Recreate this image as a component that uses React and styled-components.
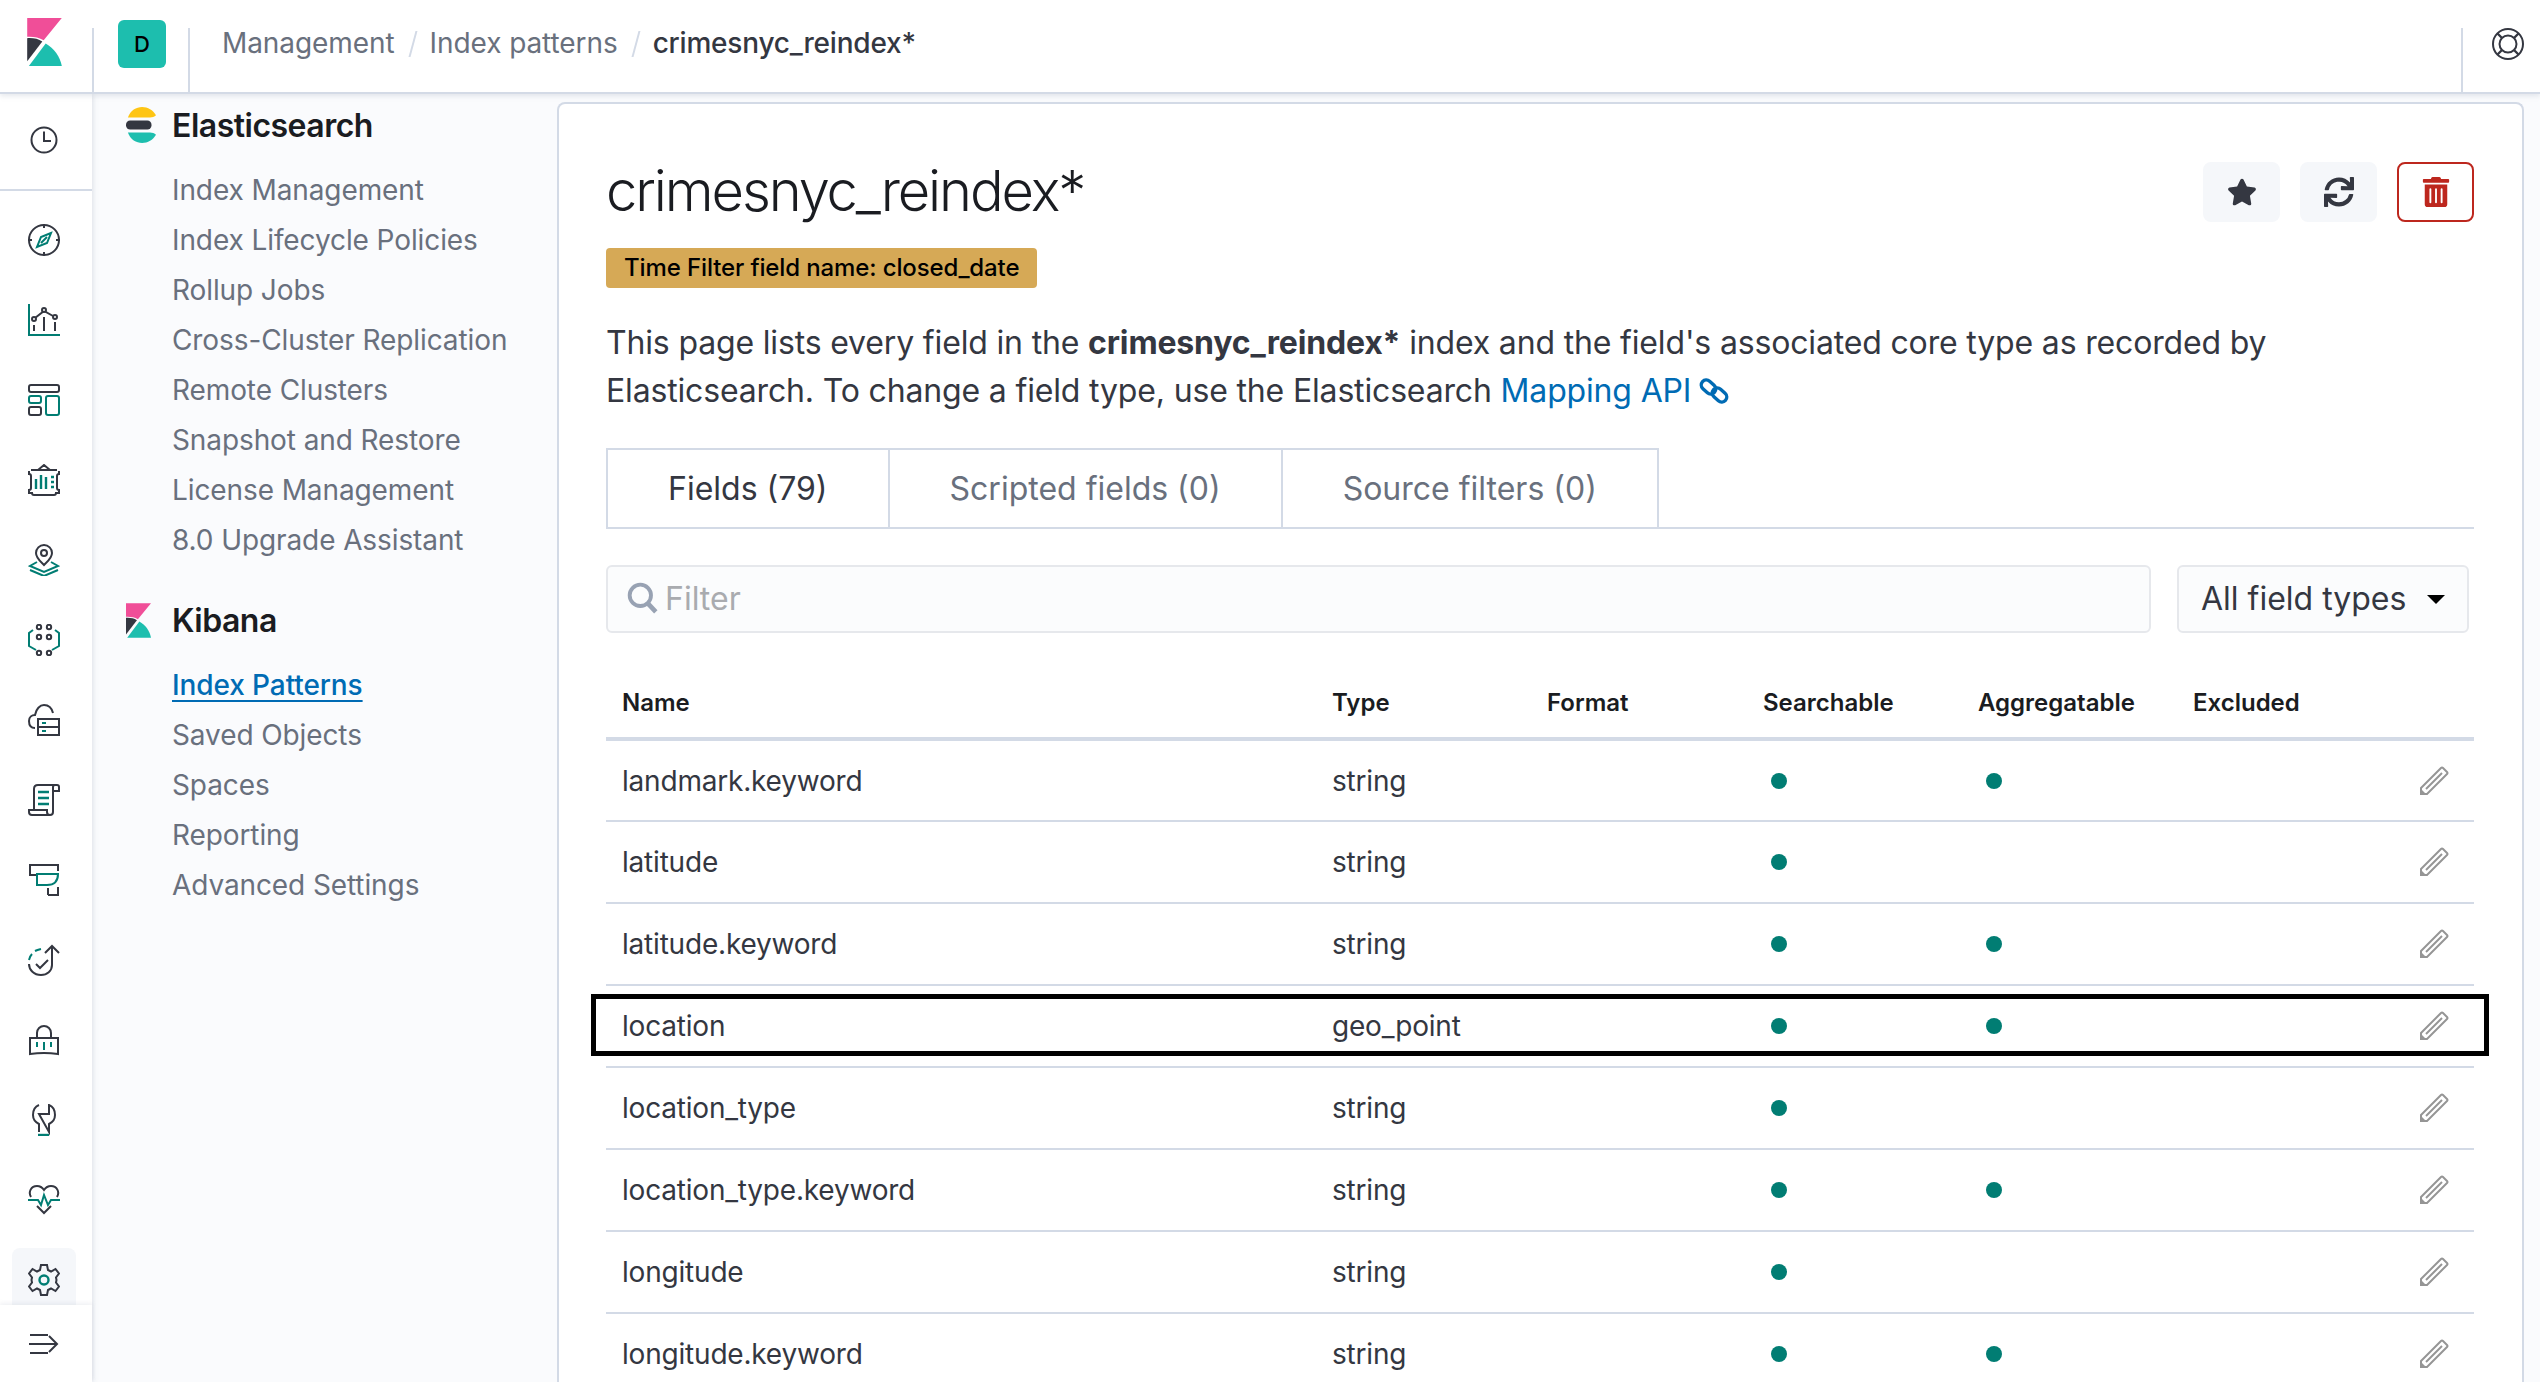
import React from "react";
import styled, { createGlobalStyle } from "styled-components";
import { FaStar, FaSync, FaTrashAlt } from "react-icons/fa";

const D = "#343741";
const G = "#017d73";

const Global = createGlobalStyle`
  html, body { margin: 0; padding: 0; height: 100%; overflow: hidden; background: #fafbfd; }
  * { box-sizing: border-box; }
  body { font-family: Inter, "Liberation Sans", sans-serif; color: ${D}; }
  #root { height: 100vh; }
`;

const Page = styled.div`
  display: flex;
  flex-direction: column;
  height: 100vh;
  overflow: hidden;
`;

const Header = styled.header`
  position: relative;
  z-index: 3;
  flex: none;
  display: flex;
  align-items: stretch;
  height: 94px;
  background: #fff;
  border-bottom: 2px solid #d3dae6;
  box-shadow: 0 2px 5px rgba(152, 162, 179, 0.25);
`;

const LogoCell = styled.div`
  flex: none;
  width: 92px;
  padding: 18px 0 0 26px;
`;

const HeaderDivider = styled.div`
  flex: none;
  align-self: flex-end;
  width: 2px;
  height: 64px;
  background: #d3dae6;
`;

const SpaceCell = styled.div`
  flex: none;
  width: 94px;
  padding: 20px 0 0 24px;
`;

const Avatar = styled.div`
  display: flex;
  align-items: center;
  justify-content: center;
  width: 48px;
  height: 48px;
  border-radius: 6px;
  background: #1dbeae;
  color: #000;
  font-size: 22px;
  font-weight: 500;
`;

const Crumbs = styled.nav`
  flex: 1;
  display: flex;
  align-items: flex-start;
  padding: 24px 0 0 32px;
  font-size: 28px;
  line-height: 38px;
  letter-spacing: -0.08px;
  color: #69707d;
`;

const CrumbSep = styled.span`
  display: inline-block;
  width: 2px;
  height: 26px;
  margin: 7px 16px 0 17px;
  background: #d3dae6;
  transform: skewX(-15deg);
`;

const CrumbCurrent = styled.span`
  color: ${D};
  font-weight: 500;
  letter-spacing: -0.2px;
`;

const HelpCell = styled.div`
  flex: none;
  width: 77px;
  padding: 28px 0 0 29px;
`;

const Body = styled.div`
  flex: 1;
  display: flex;
  min-height: 0;
`;

const Nav = styled.aside`
  position: relative;
  z-index: 2;
  flex: none;
  width: 92px;
  background: #fff;
  box-shadow: 1px 0 5px rgba(152, 162, 179, 0.3);
  display: flex;
  flex-direction: column;
`;

const RecentSection = styled.div`
  flex: none;
  height: 97px;
  display: flex;
  align-items: center;
  justify-content: center;
  padding: 0 4px 4px 0;
  border-bottom: 2px solid #d3dae6;
`;

const NavList = styled.div`
  flex: none;
  padding: 9px 4px 0 0;
`;

const NavItem = styled.div`
  height: 80px;
  display: flex;
  align-items: center;
  justify-content: center;
`;

const NavActive = styled.div`
  width: 64px;
  height: 64px;
  display: flex;
  align-items: center;
  justify-content: center;
  border-radius: 8px;
  background: #f5f7fa;
`;

const Collapse = styled.div`
  position: absolute;
  left: 0;
  right: 0;
  bottom: 0;
  height: 77px;
  display: flex;
  align-items: center;
  justify-content: center;
  padding-right: 4px;
  background: #fff;
  box-shadow: 0 -2px 4px rgba(152, 162, 179, 0.15);
`;

const Side = styled.div`
  flex: none;
  width: 465px;
  padding: 11px 0 0 34px;
  background: #fafbfd;
`;

const SideHead = styled.div`
  display: flex;
  align-items: center;
  height: 40px;
  margin: ${(p) => p.$top}px 0 20px;
  font-size: 32px;
  font-weight: 600;
  letter-spacing: -0.5px;
  color: #1a1c21;
`;

const SideIcon = styled.span`
  flex: none;
  width: 46px;
  display: flex;
  align-items: center;
`;

const SideList = styled.div`
  padding-left: 46px;
`;

const SideLink = styled.a`
  display: block;
  height: 50px;
  line-height: 50px;
  font-size: 28px;
  letter-spacing: -0.1px;
  color: ${(p) => (p.$active ? "#006bb4" : "#69707d")};
  font-weight: ${(p) => (p.$active ? 500 : 400)};
  text-decoration: ${(p) => (p.$active ? "underline" : "none")};
  text-underline-offset: 5px;
  text-decoration-thickness: 2px;
`;

const Panel = styled.main`
  flex: 1;
  min-width: 0;
  margin: 8px 16px 0 0;
  padding: 53px 48px 0 47px;
  background: #fff;
  border: 2px solid #d3dae6;
  border-bottom: 0;
  border-radius: 8px 8px 0 0;
  overflow: hidden;
`;

const TitleRow = styled.div`
  display: flex;
  justify-content: space-between;
  align-items: flex-start;
`;

const Title = styled.h1`
  margin: 0;
  font-size: 56px;
  line-height: 68px;
  font-weight: 300;
  letter-spacing: -2.1px;
  color: #1a1c21;
`;

const Actions = styled.div`
  display: flex;
  gap: 20px;
  padding-top: 5px;
`;

const IconButton = styled.button`
  width: 77px;
  height: 60px;
  display: flex;
  align-items: center;
  justify-content: center;
  padding: 0;
  border-radius: 8px;
  font-size: 30px;
  color: ${(p) => (p.$danger ? "#bd271e" : D)};
  background: ${(p) => (p.$danger ? "#fff" : "#f5f7fa")};
  border: 2px solid ${(p) => (p.$danger ? "#bd271e" : "#f5f7fa")};
`;

const Badge = styled.div`
  display: inline-block;
  height: 40px;
  margin-top: 23px;
  padding: 0 18px;
  border-radius: 4px;
  background: #d6a956;
  color: #000;
  font-size: 24px;
  line-height: 40px;
  font-weight: 500;
  letter-spacing: -0.12px;
`;

const Lead = styled.p`
  margin: 31px 0 0;
  width: 1720px;
  font-size: 32px;
  line-height: 48px;
  letter-spacing: -0.16px;
  color: ${D};
`;

const Strong = styled.strong`
  font-weight: 700;
`;

const DocLink = styled.a`
  color: #006bb4;
`;

const LinkGlyph = styled.svg`
  margin-left: 8px;
  vertical-align: -4px;
`;

const Tabs = styled.div`
  display: flex;
  margin-top: 33px;
  border-bottom: 2px solid #d3dae6;
`;

const Tab = styled.div`
  height: 81px;
  padding: 0 60px;
  margin-right: -2px;
  margin-bottom: -2px;
  line-height: 77px;
  font-size: 32px;
  border: 2px solid #d3dae6;
  color: ${(p) => (p.$active ? D : "#69707d")};
`;

const FilterRow = styled.div`
  display: flex;
  gap: 26px;
  margin-top: 36px;
  padding-right: 5px;
`;

const FilterBox = styled.div`
  flex: 1;
  height: 68px;
  display: flex;
  align-items: center;
  gap: 6px;
  padding: 0 0 2px 19px;
  background: #fbfcfd;
  border: 2px solid #e6e8ec;
  border-radius: 6px;
  font-size: 32px;
  color: #a9abaf;
`;

const SelectBox = styled.div`
  flex: none;
  width: 292px;
  height: 68px;
  display: flex;
  align-items: center;
  justify-content: space-between;
  padding: 0 22px 2px;
  background: #fbfcfd;
  border: 2px solid #e6e8ec;
  border-radius: 6px;
  font-size: 32px;
  color: ${D};
`;

const Caret = styled.span`
  width: 0;
  height: 0;
  border-left: 9px solid transparent;
  border-right: 9px solid transparent;
  border-top: 9px solid #000;
  margin-top: 2px;
`;

const Table = styled.table`
  width: 100%;
  margin-top: 35px;
  border-collapse: collapse;
  table-layout: fixed;
  font-size: 28px;
  letter-spacing: -0.2px;
`;

const Th = styled.th`
  height: 71px;
  padding: 0 16px 1px;
  text-align: left;
  font-size: 24px;
  font-weight: 600;
  letter-spacing: 0;
  color: #1a1c21;
  border-bottom: 4px solid #d3dae6;
`;

const Tr = styled.tr`
  position: relative;
  height: 82px;
  border-bottom: 2px solid #d3dae6;
`;

const Td = styled.td`
  padding: 0 16px;
  color: ${D};
`;

const EditCell = styled(Td)`
  text-align: right;
  padding-right: 25px;
  line-height: 0;
`;

const Dot = styled.span`
  display: block;
  width: 16px;
  height: 16px;
  margin-left: 8px;
  border-radius: 50%;
  background: ${G};
`;

const FocusRing = styled.span`
  position: absolute;
  top: 9px;
  left: -15px;
  right: -15px;
  height: 62px;
  border: 5px solid #000;
  pointer-events: none;
`;

const KibanaLogo = ({ w, h }) => (
  <svg width={w} height={h} viewBox="0 0 103 143" style={{ display: "block" }}>
    <path fill="#f04e98" d="M0 0H103L49 66C35 58 18 55 0 56Z" />
    <path fill={D} d="M0 60C18 59 33 62 45 70L0 129Z" />
    <path fill="#1dbeae" d="M5 143L55 76C80 90 98 115 103 143Z" />
  </svg>
);

const ElasticLogo = () => (
  <svg width="30" height="36" viewBox="0 0 80 96" style={{ display: "block" }}>
    <path fill="#fec514" d="M5 28C12 9 27 0 43 0C58 0 72 8 80 22C76 26 70 28 64 28Z" />
    <rect fill={D} x="0" y="36" width="68" height="24" rx="11" />
    <path fill="#1dbeae" d="M5 68H64C70 68 76 70 80 74C72 88 58 96 43 96C27 96 12 87 5 68Z" />
  </svg>
);

const Ic = ({ size = 32, children }) => (
  <svg width={size} height={size} viewBox="0 0 32 32" fill="none" strokeWidth="2" style={{ display: "block" }}>
    {children}
  </svg>
);

const Clock = () => (
  <Ic>
    <g stroke={D}>
      <circle cx="16" cy="16" r="12.5" />
      <path d="M16 7.5V17H23" />
    </g>
  </Ic>
);
const Compass = () => (
  <Ic>
    <g stroke={D}>
      <circle cx="16" cy="16" r="15" />
      <path d="M16 0V4M16 28V32M0 16H4M28 16H32" />
    </g>
    <path stroke={G} d="M23 9L13 13L9 23L19 19Z" />
    <path stroke={G} d="M19 13L13 19" />
  </Ic>
);
const Visualize = () => (
  <Ic>
    <path stroke={G} d="M1 0V31H32" />
    <g stroke={D}>
      <path d="M7 14L16 7L25 12" />
      <circle cx="6" cy="15" r="2" fill="#fff" />
      <circle cx="16" cy="6" r="2" fill="#fff" />
      <circle cx="27" cy="13" r="2" fill="#fff" />
      <path d="M6 21V27M16 13V27M27 18V27" />
    </g>
  </Ic>
);
const Dashboard = () => (
  <Ic>
    <rect stroke={D} x="1" y="1" width="30" height="7" rx="2" />
    <rect stroke={G} x="1" y="12" width="12" height="7" rx="2" />
    <rect stroke={D} x="1" y="23" width="12" height="8" rx="2" />
    <rect stroke={G} x="18" y="12" width="13" height="19" rx="2" />
  </Ic>
);
const CanvasIcon = () => (
  <Ic>
    <path stroke={D} d="M10 6L16 1L22 6M3 6H29M1 7V10Q3 10 3 12V24Q3 26 1 26V29H4Q4 31 6 31H26Q28 31 28 29H31V26Q29 26 29 24V12Q29 10 31 10V7" />
    <path stroke={G} strokeWidth="2.4" d="M8 15V25M13 11V25M18 13V25M23 13H26M23 18H26M23 23H26" />
  </Ic>
);
const Maps = () => (
  <Ic>
    <path stroke={D} d="M16 21C12 17 8 14 8 9A8 8 0 0 1 24 9C24 14 20 17 16 21Z" />
    <circle stroke={D} cx="16" cy="9" r="3" />
    <path stroke={G} d="M9 18L2 22L16 28L30 22L23 18M2 26L16 32L30 26" />
  </Ic>
);
const ML = () => (
  <Ic>
    <g stroke={D}>
      <circle cx="11" cy="3" r="2.2" />
      <circle cx="21" cy="3" r="2.2" />
      <circle cx="11" cy="13" r="2.2" />
      <circle cx="21" cy="13" r="2.2" />
      <circle cx="11" cy="29" r="2.2" />
      <circle cx="21" cy="29" r="2.2" />
    </g>
    <path stroke={G} d="M5 6L1 9V22L8 26M27 6L31 9V22L24 26" />
  </Ic>
);
const Infra = () => (
  <Ic>
    <path stroke={D} d="M7 24C3 24 1 21 1 17C1 13 4 11 7 11C8 5 12 1 16 1C21 1 24 5 25 9" />
    <path stroke={D} d="M10 15H31V31H10ZM10 23H31" />
    <path stroke={G} d="M14 19H18M14 27H18" />
  </Ic>
);
const Logs = () => (
  <Ic>
    <path stroke={D} d="M6 26V5Q6 1 10 1H29Q31 1 31 3V7H25V3Q25 1 27 1M25 7V28Q25 31 22 31H4Q1 31 1 28V26H19V28Q19 31 22 31" />
    <path stroke={G} strokeWidth="2.4" d="M10 8H21M10 14H21M10 20H21" />
  </Ic>
);
const Apm = () => (
  <Ic>
    <path stroke={D} d="M8 11H2V1H30V7M20 31V24M20 31H30V23" />
    <path stroke={G} d="M9 10H30Q30 21 19 21H9Z" />
  </Ic>
);
const Uptime = () => (
  <Ic>
    <path stroke={D} d="M1 20C1 26 6 31 13 31C19 31 24 27 24 21V3M17 9L24 2L31 9" />
    <path stroke={D} d="M8 20L12 24L20 16" />
    <path stroke={G} d="M1 16Q2 12 4 10M7 7Q9 6 13 5" />
  </Ic>
);
const Siem = () => (
  <Ic>
    <path stroke={D} d="M9 14V9A7 7 0 0 1 23 9V14M2 14H30V30Q16 28 2 30Z" />
    <path stroke={G} d="M9 18V23M16 18V26M23 18V23" />
  </Ic>
);
const DevTools = () => (
  <Ic>
    <path stroke={D} d="M11 1C6 3 5 7 5 11C5 15 7 18 11 20V28M21 28V20C25 18 27 15 27 11C27 7 26 3 21 1V10H11Z" />
    <path stroke={G} strokeWidth="2.4" d="M10 31H21" />
  </Ic>
);
const Monitoring = () => (
  <Ic>
    <path stroke={D} d="M3 13C0 8 3 2 9 2C12 2 14 3 16 6C18 3 20 2 23 2C29 2 32 8 29 13M9 22L16 29L23 22" />
    <path stroke={G} d="M0 16H10L13 21L16 11L20 21L23 16H32" />
  </Ic>
);
const Gear = () => (
  <Ic>
    <path stroke={D} d="M13 1H19L20 6L23 7.5L27.5 5L31 9.5L28 13.5L28.5 16L28 18.5L31 22.5L27.5 27L23 24.5L20 26L19 31H13L12 26L9 24.5L4.5 27L1 22.5L4 18.5L3.5 16L4 13.5L1 9.5L4.5 5L9 7.5L12 6Z" />
    <circle stroke={G} strokeWidth="2.4" cx="16" cy="16" r="4.5" />
  </Ic>
);
const CollapseIcon = () => (
  <Ic>
    <path stroke={D} d="M2 7H20M1 16H28M2 25H20M21 8L29 16L21 24" />
  </Ic>
);
const Help = () => (
  <Ic>
    <g stroke={D}>
      <circle cx="16" cy="16" r="15" />
      <circle cx="16" cy="16" r="8.5" />
      <path strokeWidth="2.4" d="M5.5 5.5L10 10M26.5 5.5L22 10M5.5 26.5L10 22M26.5 26.5L22 22" />
    </g>
  </Ic>
);

const Search = () => (
  <svg width="32" height="32" viewBox="0 0 30 30" fill="none" style={{ display: "block" }}>
    <circle cx="12.5" cy="12.5" r="10" stroke="#98a2b3" strokeWidth="3.6" />
    <path d="M19.5 20L27 28" stroke="#98a2b3" strokeWidth="4.4" />
  </svg>
);

const Pencil = () => (
  <svg width="30" height="30" viewBox="0 0 30 30" fill="none" style={{ display: "inline-block" }}>
    <path d="M2 22L22 2Q23 1 24 2L28 6Q29 7 28 8L8 28H2Z" stroke="#959595" strokeWidth="2" />
    <path d="M7 23L23 7" stroke="#959595" strokeWidth="2" />
    <path d="M1 22L8 29H1Z" fill="#959595" />
  </svg>
);

const ChainIcon = () => (
  <LinkGlyph width="30" height="30" viewBox="0 0 30 30" fill="none" stroke="#006bb4" strokeWidth="3.4">
    <rect x="1.5" y="6" width="16" height="10" rx="5" transform="rotate(42 9.5 11)" />
    <rect x="12.5" y="14" width="16" height="10" rx="5" transform="rotate(42 20.5 19)" />
  </LinkGlyph>
);

const navIcons = [Compass, Visualize, Dashboard, CanvasIcon, Maps, ML, Infra, Logs, Apm, Uptime, Siem, DevTools, Monitoring];

const esLinks = [
  "Index Management",
  "Index Lifecycle Policies",
  "Rollup Jobs",
  "Cross-Cluster Replication",
  "Remote Clusters",
  "Snapshot and Restore",
  "License Management",
  "8.0 Upgrade Assistant",
];
const kbLinks = ["Index Patterns", "Saved Objects", "Spaces", "Reporting", "Advanced Settings"];

const rows = [
  ["landmark.keyword", "string", true, true],
  ["latitude", "string", true, false],
  ["latitude.keyword", "string", true, true],
  ["location", "geo_point", true, true, true],
  ["location_type", "string", true, false],
  ["location_type.keyword", "string", true, true],
  ["longitude", "string", true, false],
  ["longitude.keyword", "string", true, true],
];

export default function App() {
  return (
    <Page>
      <Global />
      <Header>
        <LogoCell>
          <KibanaLogo w={37} h={48} />
        </LogoCell>
        <HeaderDivider />
        <SpaceCell>
          <Avatar>D</Avatar>
        </SpaceCell>
        <HeaderDivider />
        <Crumbs>
          <span>Management</span>
          <CrumbSep />
          <span>Index patterns</span>
          <CrumbSep />
          <CrumbCurrent>crimesnyc_reindex*</CrumbCurrent>
        </Crumbs>
        <HeaderDivider />
        <HelpCell>
          <Help />
        </HelpCell>
      </Header>
      <Body>
        <Nav>
          <RecentSection>
            <Clock />
          </RecentSection>
          <NavList>
            {navIcons.map((I, i) => (
              <NavItem key={i}>
                <I />
              </NavItem>
            ))}
            <NavItem>
              <NavActive>
                <Gear />
              </NavActive>
            </NavItem>
          </NavList>
          <Collapse>
            <CollapseIcon />
          </Collapse>
        </Nav>
        <Side>
          <SideHead $top={0}>
            <SideIcon>
              <ElasticLogo />
            </SideIcon>
            Elasticsearch
          </SideHead>
          <SideList>
            {esLinks.map((l) => (
              <SideLink key={l}>{l}</SideLink>
            ))}
          </SideList>
          <SideHead $top={35}>
            <SideIcon>
              <KibanaLogo w={25} h={35} />
            </SideIcon>
            Kibana
          </SideHead>
          <SideList>
            {kbLinks.map((l, i) => (
              <SideLink key={l} $active={i === 0}>
                {l}
              </SideLink>
            ))}
          </SideList>
        </Side>
        <Panel>
          <TitleRow>
            <Title>crimesnyc_reindex*</Title>
            <Actions>
              <IconButton>
                <FaStar />
              </IconButton>
              <IconButton>
                <FaSync />
              </IconButton>
              <IconButton $danger>
                <FaTrashAlt />
              </IconButton>
            </Actions>
          </TitleRow>
          <Badge>Time Filter field name: closed_date</Badge>
          <Lead>
            This page lists every field in the <Strong>crimesnyc_reindex*</Strong> index and the field's associated core
            type as recorded by Elasticsearch. To change a field type, use the Elasticsearch{" "}
            <DocLink>
              Mapping API
              <ChainIcon />
            </DocLink>
          </Lead>
          <Tabs>
            <Tab $active>Fields (79)</Tab>
            <Tab>Scripted fields (0)</Tab>
            <Tab>Source filters (0)</Tab>
          </Tabs>
          <FilterRow>
            <FilterBox>
              <Search />
              Filter
            </FilterBox>
            <SelectBox>
              All field types
              <Caret />
            </SelectBox>
          </FilterRow>
          <Table>
            <colgroup>
              <col style={{ width: 710 }} />
              <col style={{ width: 215 }} />
              <col style={{ width: 216 }} />
              <col style={{ width: 215 }} />
              <col style={{ width: 215 }} />
              <col style={{ width: 200 }} />
              <col />
            </colgroup>
            <thead>
              <tr>
                <Th>Name</Th>
                <Th>Type</Th>
                <Th>Format</Th>
                <Th>Searchable</Th>
                <Th>Aggregatable</Th>
                <Th>Excluded</Th>
                <Th />
              </tr>
            </thead>
            <tbody>
              {rows.map(([name, type, s, a, focus]) => (
                <Tr key={name}>
                  <Td>{name}</Td>
                  <Td>{type}</Td>
                  <Td />
                  <Td>{s && <Dot />}</Td>
                  <Td>{a && <Dot />}</Td>
                  <Td />
                  <EditCell>
                    <Pencil />
                    {focus && <FocusRing />}
                  </EditCell>
                </Tr>
              ))}
            </tbody>
          </Table>
        </Panel>
      </Body>
    </Page>
  );
}
